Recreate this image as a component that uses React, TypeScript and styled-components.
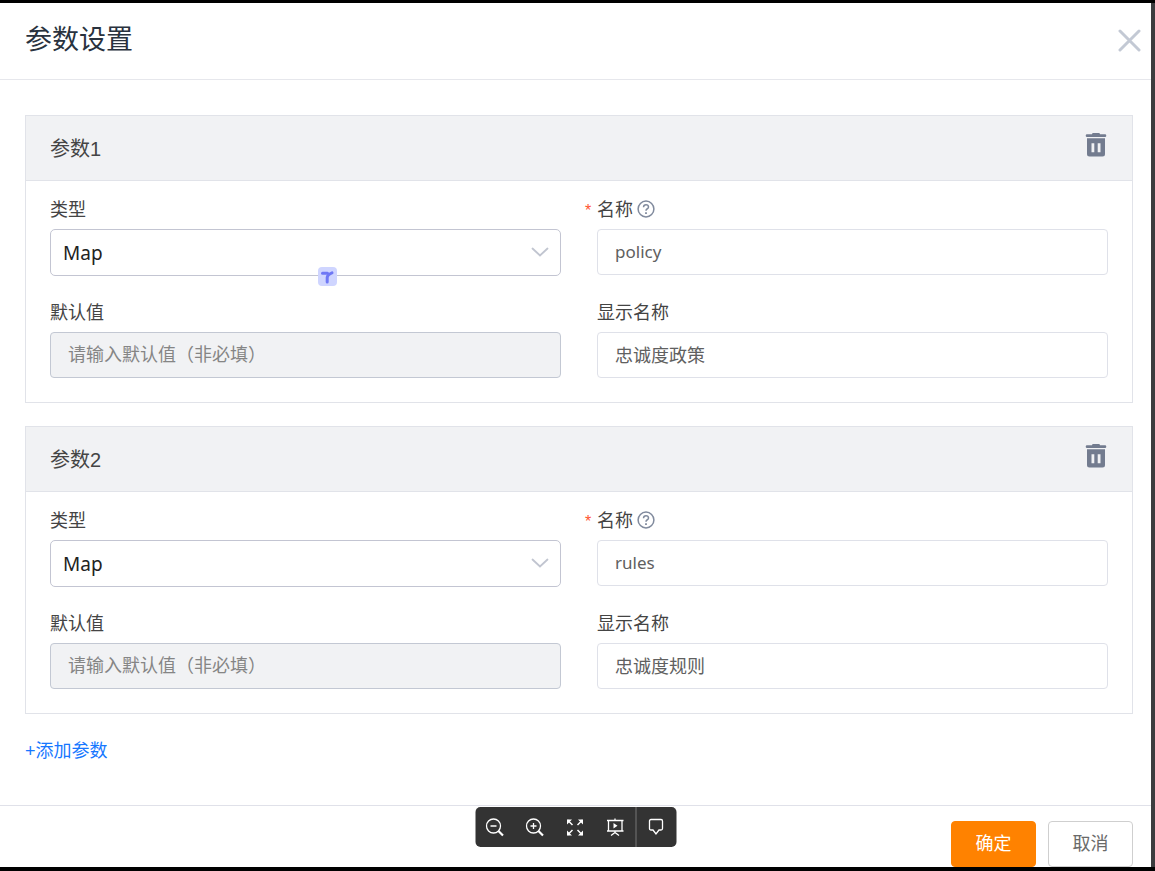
import React, { useId } from "react";
import styled, { createGlobalStyle } from "styled-components";

const GlobalStyle = createGlobalStyle`
  *, *::before, *::after { box-sizing: border-box; }
  body {
    margin: 0;
    background: #000;
    font-family: "Liberation Sans", "Noto Sans CJK SC", sans-serif;
    color: #444;
  }
  button, input, select { font-family: inherit; margin: 0; }
`;

const Frame = styled.div`
  min-height: 100vh;
  display: flex;
  padding: 3px 0 4px;
  background: #000;
`;

const Dialog = styled.section`
  position: relative;
  flex: 1;
  display: flex;
  flex-direction: column;
  background: #fff;
  border-right: 4px solid #3c3d3f;
`;

const DialogHeader = styled.header`
  display: flex;
  align-items: center;
  justify-content: space-between;
  height: 77px;
  padding: 0 10px 2px 25px;
  border-bottom: 1px solid #e6e7ec;
`;

const Title = styled.h1`
  margin: 0;
  font-size: 27px;
  line-height: 36px;
  font-weight: 400;
  color: #29323e;
`;

const IconButton = styled.button`
  display: flex;
  padding: 0;
  border: 0;
  background: none;
  cursor: pointer;
`;

const CloseButton = styled(IconButton)`
  color: #c3c9d4;
`;

const Content = styled.form`
  flex: 1;
  display: flex;
  flex-direction: column;
  gap: 23px;
  padding: 35px 18px 40px 25px;
`;

const Card = styled.fieldset`
  min-width: 0;
  margin: 0;
  padding: 0;
  border: 1px solid #e1e3e9;
`;

const CardHeader = styled.div`
  display: flex;
  align-items: center;
  justify-content: space-between;
  height: 65px;
  padding: 2px 25px 0 24px;
  background: #f1f2f4;
  border-bottom: 1px solid #e1e3e9;
`;

const CardTitle = styled.h2`
  margin: 0;
  font-size: 20px;
  line-height: 28px;
  font-weight: 400;
  color: #444;
`;

const DeleteButton = styled(IconButton)`
  padding-bottom: 8px;
  color: #737c8f;
`;

const Fields = styled.div`
  display: grid;
  grid-template-columns: 1fr 1fr;
  gap: 24px 36px;
  padding: 16px 24px 24px;
`;

const Field = styled.div`
  display: flex;
  flex-direction: column;
  gap: 8px;
  min-width: 0;
`;

const LabelRow = styled.div`
  display: flex;
  align-items: center;
  gap: 4px;
  height: 24px;
`;

const Label = styled.label`
  font-size: 18px;
  line-height: 26px;
  padding-top: 2px;
  color: #444;
`;

const Required = styled.span`
  display: inline-block;
  width: 12px;
  margin-left: -12px;
  font-size: 16px;
  color: #ff5530;
`;

const HelpIcon = styled.svg`
  color: #808a9d;
`;

const TextInput = styled.input<{ $latin?: boolean }>`
  width: 100%;
  height: 46px;
  padding: 0 17px 2px;
  border: 1px solid #dfe1e9;
  border-radius: 4px;
  background: #fff;
  font-family: "Noto Sans", "Noto Sans CJK SC", sans-serif;
  font-size: ${(p) => (p.$latin ? "17px" : "18px")};
  color: #606060;
  outline: 0;

  &:disabled {
    background: #f1f2f4;
    border-color: #c3c8d3;
  }
  &::placeholder {
    color: #858585;
    opacity: 1;
  }
`;

const SelectBox = styled.div`
  position: relative;
`;

const Select = styled.select`
  display: block;
  width: 100%;
  height: 47px;
  padding: 0 48px 0 12px;
  appearance: none;
  border: 1px solid #c3c5d2;
  border-radius: 5px;
  background: #fff;
  font-family: "Noto Sans", sans-serif;
  font-size: 19px;
  color: #222;
  outline: 0;
`;

const Chevron = styled.svg`
  position: absolute;
  right: 12px;
  top: 18px;
  pointer-events: none;
`;

const AssistBadge = styled.svg`
  position: absolute;
  left: 268px;
  bottom: -10px;
`;

const AddLink = styled.a`
  align-self: flex-start;
  font-size: 18px;
  line-height: 28px;
  color: #1677ff;
  text-decoration: none;
`;

const DialogFooter = styled.footer`
  display: flex;
  justify-content: flex-end;
  gap: 12px;
  padding: 15px 18px 0;
  border-top: 1px solid #e0e1e9;
`;

const ActionButton = styled.button<{ $primary?: boolean }>`
  width: 85px;
  height: 46px;
  padding: 0 0 4px;
  border: 1px solid ${(p) => (p.$primary ? "#ff8200" : "#cfcfcf")};
  border-radius: 4px;
  background: ${(p) => (p.$primary ? "#ff8200" : "#fff")};
  color: ${(p) => (p.$primary ? "#fff" : "#6a6a6a")};
  font-size: 18px;
  cursor: pointer;
`;

const ViewerToolbar = styled.div`
  position: absolute;
  left: 50%;
  bottom: 20px;
  transform: translateX(-50%);
  display: flex;
  height: 40px;
  border-radius: 5px;
  background: #333;
  overflow: hidden;
`;

const ToolButton = styled(IconButton)<{ $divided?: boolean }>`
  width: ${(p) => (p.$divided ? "41px" : "40px")};
  align-items: center;
  justify-content: center;
  color: #fff;
  border-left: ${(p) => (p.$divided ? "1px solid #777" : "0")};
`;

const toolIcons: { label: string; divided?: boolean; art: React.ReactNode }[] = [
  {
    label: "缩小",
    art: (
      <>
        <circle cx="8" cy="8" r="7" />
        <path d="M5 8h6" />
        <path d="M13 13l4.500 4.500" strokeWidth="2.200" />
      </>
    ),
  },
  {
    label: "放大",
    art: (
      <>
        <circle cx="8" cy="8" r="7" />
        <path d="M5 8h6M8 5v6" />
        <path d="M13 13l4.500 4.500" strokeWidth="2.200" />
      </>
    ),
  },
  {
    label: "全屏",
    art: (
      <>
        <path d="M2 2L7 7M17 2L12 7M2 17L7 12M17 17L12 12" strokeWidth="1.500" />
        <path
          d="M1.500 1.500h5L1.500 6.500zM17.500 1.500h-5l5 5zM1.500 17.500h5l-5-5zM17.500 17.500h-5l5-5z"
          fill="currentColor"
          stroke="none"
        />
      </>
    ),
  },
  {
    label: "演示",
    art: (
      <>
        <path d="M9.500 0.500v2M3 2.500v10.500M16.500 2.500v10.500M1.500 2.500h16.500M1.500 13h16.500M9.500 13v2M9.500 14.500l-4 3M9.500 14.500l4 3" />
        <path d="M8 5l4 2.700L8 10.500z" fill="currentColor" stroke="none" />
      </>
    ),
  },
  {
    label: "批注",
    divided: true,
    art: <path d="M4.500 1.500h10q1.500 0 1.500 1.500v7.500q0 1.500-1.500 1.500h-2L9.500 16l-3-4h-2Q3 12 3 10.500V3q0-1.500 1.500-1.500z" />,
  },
];

interface Param {
  name: string;
  display: string;
}

const params: Param[] = [
  { name: "policy", display: "忠诚度政策" },
  { name: "rules", display: "忠诚度规则" },
];

function ParamCard({ param, index }: { param: Param; index: number }) {
  const id = useId();
  return (
    <Card>
      <CardHeader>
        <CardTitle>参数{index + 1}</CardTitle>
        <DeleteButton type="button" aria-label="删除">
          <svg width="22" height="26" viewBox="0 0 22 26" fill="currentColor">
            <path d="M7 2.300Q7 1 8.300 1h5.400Q15 1 15 2.300h5q1.300 0 1.300 1.350T20 5H2Q.7 5 .7 3.650T2 2.300z" />
            <path
              fillRule="evenodd"
              d="M2 6.300h18v15.700q0 2.500-2.500 2.500h-13Q2 24.500 2 22zM6.500 11.300v9h2.800v-9zM12.700 11.300v9h2.800v-9z"
            />
          </svg>
        </DeleteButton>
      </CardHeader>
      <Fields>
        <Field>
          <LabelRow>
            <Label htmlFor={id + "type"}>类型</Label>
          </LabelRow>
          <SelectBox>
            <Select id={id + "type"} defaultValue="Map">
              <option>Map</option>
            </Select>
            <Chevron width="18" height="11" viewBox="0 0 18 11" fill="none" stroke="#c1c5d0" strokeWidth="1.800">
              <path d="M1.500 1.500L9 8.500l7.500-7" strokeLinecap="round" />
            </Chevron>
            {index === 0 && (
              <AssistBadge width="19" height="19" viewBox="0 0 19 19">
                <rect width="19" height="19" rx="4" fill="#cfd5ff" />
                <g fill="none" stroke="#6f78f5" strokeLinecap="round" strokeLinejoin="round">
                  <path d="M4.500 6.300h5" strokeWidth="3" />
                  <path d="M9.200 15V10.500Q9.500 7.500 14 5.800" strokeWidth="3" />
                </g>
              </AssistBadge>
            )}
          </SelectBox>
        </Field>
        <Field>
          <LabelRow>
            <Label htmlFor={id + "name"}>
              <Required>*</Required>名称
            </Label>
            <HelpIcon width="18" height="18" viewBox="0 0 18 18" fill="none" stroke="currentColor" strokeWidth="1.500">
              <circle cx="9" cy="9" r="7.900" />
              <path d="M6.500 7.200Q6.600 4.700 9 4.700t2.500 2.200Q11.500 8.200 10 9q-1 .6-1 1.700" />
              <path d="M9 12.200v1.700" strokeWidth="1.800" />
            </HelpIcon>
          </LabelRow>
          <TextInput id={id + "name"} defaultValue={param.name} $latin />
        </Field>
        <Field>
          <LabelRow>
            <Label htmlFor={id + "default"}>默认值</Label>
          </LabelRow>
          <TextInput id={id + "default"} placeholder="请输入默认值（非必填）" disabled />
        </Field>
        <Field>
          <LabelRow>
            <Label htmlFor={id + "display"}>显示名称</Label>
          </LabelRow>
          <TextInput id={id + "display"} defaultValue={param.display} />
        </Field>
      </Fields>
    </Card>
  );
}

export default function App() {
  return (
    <>
      <GlobalStyle />
      <Frame>
        <Dialog role="dialog" aria-label="参数设置">
          <DialogHeader>
            <Title>参数设置</Title>
            <CloseButton type="button" aria-label="关闭">
              <svg width="23" height="23" viewBox="0 0 23 23" fill="none" stroke="currentColor" strokeWidth="3">
                <path d="M2 2l19 19M21 2L2 21" strokeLinecap="round" />
              </svg>
            </CloseButton>
          </DialogHeader>
          <Content>
            {params.map((param, index) => (
              <ParamCard key={param.name} param={param} index={index} />
            ))}
            <AddLink href="#add">+添加参数</AddLink>
          </Content>
          <DialogFooter>
            <ActionButton type="button" $primary>
              确定
            </ActionButton>
            <ActionButton type="button">取消</ActionButton>
          </DialogFooter>
          <ViewerToolbar role="toolbar">
            {toolIcons.map((tool) => (
              <ToolButton key={tool.label} type="button" aria-label={tool.label} $divided={tool.divided}>
                <svg width="19" height="19" viewBox="0 0 19 19" fill="none" stroke="currentColor" strokeWidth="1.300">
                  {tool.art}
                </svg>
              </ToolButton>
            ))}
          </ViewerToolbar>
        </Dialog>
      </Frame>
    </>
  );
}
